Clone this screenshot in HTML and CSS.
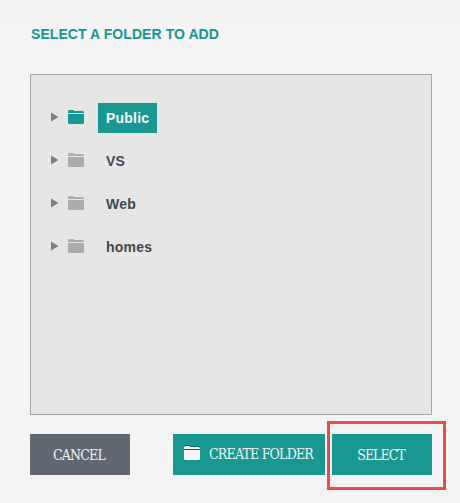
FILE: index.html
```html
<!DOCTYPE html>
<html lang="en">
<head>
<meta charset="utf-8">
<title>Select a folder to add</title>
<link rel="stylesheet" href="styles.css">
</head>
<body>
<svg class="defs" aria-hidden="true">
  <symbol id="folder" viewBox="0 0 16 15">
    <path d="M0 3V1.500Q0 0 1.500 0H5q1 0 1.400 1H14.500Q16 1 16 3z"/>
    <path d="M0 4H16V12.500Q16 14 14.500 14H1.500Q0 14 0 12.500z"/>
  </symbol>
  <symbol id="arrow" viewBox="0 0 8 10"><path d="M0 .5 7.500 5 0 9.500z"/></symbol>
</svg>
<main class="dialog">
  <h1 class="title">SELECT A FOLDER TO ADD</h1>
  <ul class="tree">
    <li class="row selected"><svg class="arrow"><use href="#arrow"/></svg><svg class="folder"><use href="#folder"/></svg><span class="label">Public</span></li>
    <li class="row"><svg class="arrow"><use href="#arrow"/></svg><svg class="folder"><use href="#folder"/></svg><span class="label">VS</span></li>
    <li class="row"><svg class="arrow"><use href="#arrow"/></svg><svg class="folder"><use href="#folder"/></svg><span class="label">Web</span></li>
    <li class="row"><svg class="arrow"><use href="#arrow"/></svg><svg class="folder"><use href="#folder"/></svg><span class="label">homes</span></li>
  </ul>
  <div class="actions">
    <button class="button cancel">CANCEL</button>
    <button class="button create"><svg class="folder"><use href="#folder"/></svg><span class="create-text">CREATE FOLDER</span></button>
    <div class="highlight-anchor"><button class="button select">SELECT</button></div>
  </div>
</main>
</body>
</html>
```

FILE: styles.css
```css
* { box-sizing: border-box; }
body {
  margin: 0;
  height: 503px;
  overflow: hidden;
  background: linear-gradient(#f1f1f1 0 24px, #f4f4f4 24px);
  font-family: "Liberation Sans", Arial, sans-serif;
}
.defs { display: none; }
.dialog { width: 402px; margin-left: 30px; padding-top: 25px; }
.title {
  margin: 0 0 31px;
  padding-left: 1px;
  font-size: 14px;
  line-height: 18px;
  letter-spacing: .07px;
  white-space: nowrap;
  color: #149792;
}
.tree {
  display: flex;
  flex-direction: column;
  gap: 13px;
  height: 341px;
  margin: 0;
  padding: 28px 0 0 20px;
  list-style: none;
  border: 1px solid #a6a6a6;
  background: #e6e6e6;
}
.row { display: flex; align-items: center; height: 30px; color: #aaacaa; }
.row.selected { color: #199891; }
.arrow { width: 8px; height: 10px; margin-right: 9px; margin-bottom: 2px; fill: #7d7d7d; }
.folder { width: 16px; height: 15px; fill: currentColor; flex: none; }
.row .folder { margin-bottom: 1px; }
.label {
  margin-left: 14px;
  padding: 0 8px;
  font-size: 14px;
  font-weight: bold;
  line-height: 30px;
  letter-spacing: .2px;
  color: #42474f;
}
.selected .label { width: 59px; background: #199891; color: #f2f8f8; }
.actions { display: flex; margin-top: 19px; }
.button {
  display: flex;
  align-items: center;
  justify-content: center;
  width: 100px;
  height: 41px;
  padding: 0 2px 0 0;
  border: 0;
  background: #199891;
  color: #f2f5f5;
  font: 14px "DejaVu Serif Condensed", "DejaVu Serif", serif;
  font-stretch: condensed;
  letter-spacing: -.8px;
  white-space: nowrap;
}
.cancel { background: #5f6773; }
.select { letter-spacing: -1px; }
.create { width: 152px; margin: 0 7px 0 43px; justify-content: flex-start; padding: 0 0 2px 11px; }
.create .folder { overflow: visible; filter: drop-shadow(0 -1px 0 #0c5f60); }
.create-text { margin-left: 9px; }
.highlight-anchor { position: relative; }
.highlight-anchor::after {
  content: "";
  position: absolute;
  inset: -13px -14px -15px -5px;
  border: 3px solid #ea4b45;
}
```
